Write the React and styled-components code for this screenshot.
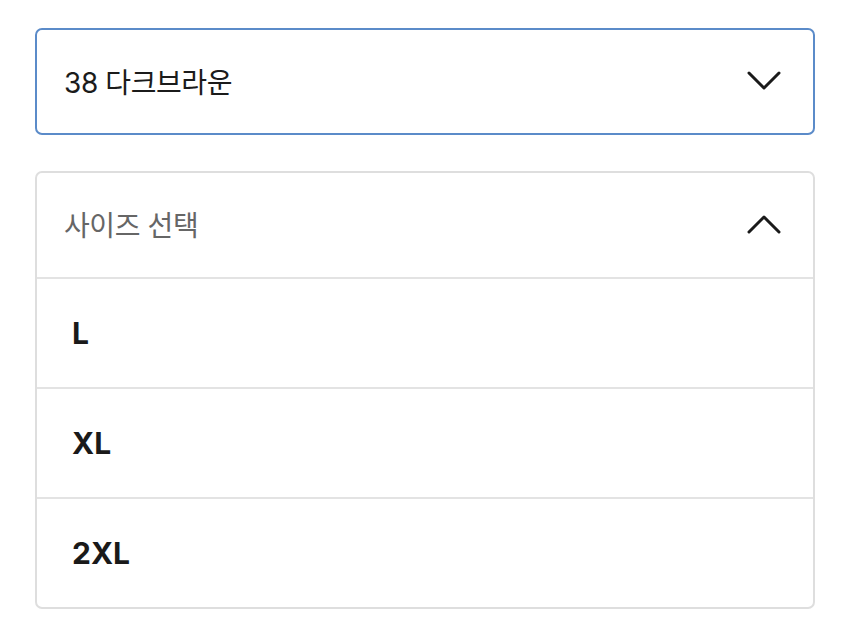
import React from 'react'
import styled, { createGlobalStyle } from 'styled-components'

const GlobalStyle = createGlobalStyle`
  body {
    margin: 0;
    background: #fff;
    font-family: Inter, "Noto Sans CJK KR", "Noto Sans", sans-serif;
  }
`

const Page = styled.div`
  padding: 28px 35px;
  display: flex;
  flex-direction: column;
  gap: 36px;
`

const Select = styled.div`
  border: 2px solid ${p => (p.$active ? '#5b8bc9' : '#dedede')};
  border-radius: 7px;
  background: #fff;
  overflow: hidden;
`

const Header = styled.div`
  height: ${p => p.$h}px;
  box-sizing: border-box;
  padding: 0 32px 2px 27px;
  display: flex;
  align-items: center;
  justify-content: space-between;
  font-size: 28px;
  letter-spacing: -0.4px;
  color: ${p => (p.$muted ? '#666' : '#1b1b1b')};
`

const Option = styled.div`
  height: 108px;
  border-top: 2px solid #e3e3e3;
  padding-left: 35px;
  display: flex;
  align-items: center;
  font-size: 30px;
  font-weight: 700;
  color: #1a1a1a;
`

const Chevron = ({ up }) => (
  <svg width="34" height="19" viewBox="0 0 34 19" fill="none">
    <path
      d={up ? 'M2 17 L17 2 L32 17' : 'M2 2 L17 17 L32 2'}
      stroke="#1a1a1a"
      strokeWidth="3"
      strokeLinecap="round"
      strokeLinejoin="round"
    />
  </svg>
)

export default function App() {
  const sizes = ['L', 'XL', '2XL']
  return (
    <>
      <GlobalStyle />
      <Page>
        <Select $active>
          <Header $h={103}>
            <span>38 다크브라운</span>
            <Chevron />
          </Header>
        </Select>
        <Select>
          <Header $h={104} $muted>
            <span>사이즈 선택</span>
            <Chevron up />
          </Header>
          {sizes.map(s => (
            <Option key={s}>{s}</Option>
          ))}
        </Select>
      </Page>
    </>
  )
}
